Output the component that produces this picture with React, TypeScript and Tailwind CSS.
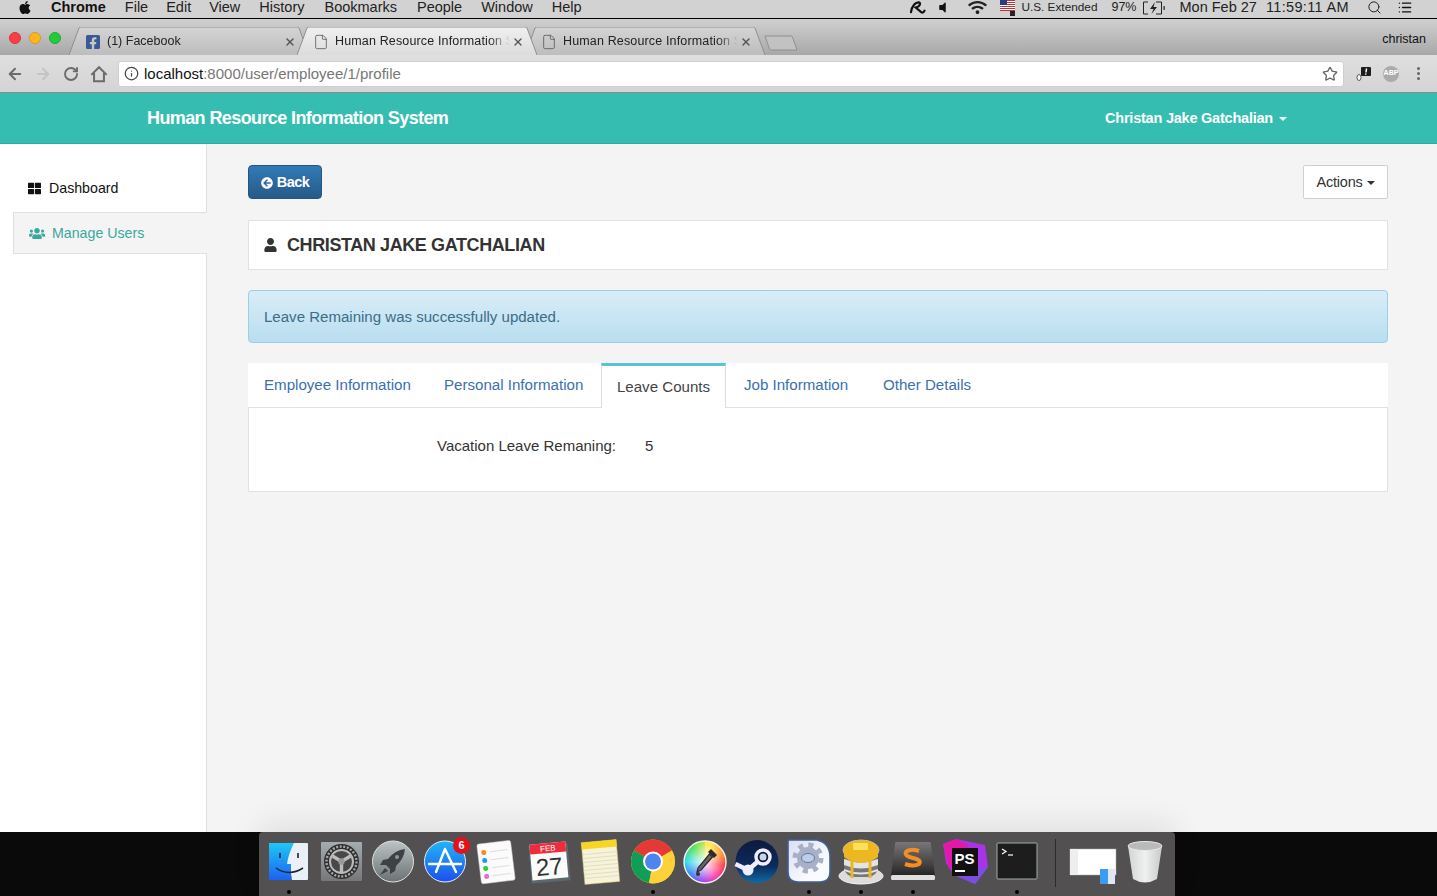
import { Star, X, Info, ArrowLeft, ArrowRight, RotateCw, Search, List, File } from 'lucide-react';
import { FaThLarge, FaUser, FaUsers, FaArrowCircleLeft, FaApple, FaFacebookSquare, FaWifi, FaVolumeOff } from 'react-icons/fa';

const sans = 'font-["Liberation_Sans",Arial,sans-serif]';

function Caret({ className = '' }: { className?: string }) {
    return <span className={`inline-block w-0 h-0 border-x-[4px] border-x-transparent border-t-[4px] border-t-current ${className}`} />;
}

function TabShape({ active }: { active?: boolean }) {
    return (
        <svg className="absolute inset-0 w-full h-full" viewBox="0 0 240 28" preserveAspectRatio="none">
            <defs>
                <linearGradient id="tabOn" x1="0" y1="0" x2="0" y2="1">
                    <stop offset="0" stopColor="#f0f0f0" />
                    <stop offset="1" stopColor="#dcdcdc" />
                </linearGradient>
                <linearGradient id="tabOff" x1="0" y1="0" x2="0" y2="1">
                    <stop offset="0" stopColor="#d4d4d4" />
                    <stop offset="1" stopColor="#bdbdbd" />
                </linearGradient>
            </defs>
            <path d="M0 28 L10 1 Q10.5 0 12 0 L228 0 Q229.5 0 230 1 L240 28" fill={active ? 'url(#tabOn)' : 'url(#tabOff)'} stroke="#8f8f8f" strokeWidth="1" vectorEffect="non-scaling-stroke" />
        </svg>
    );
}

function Tab({ title, active, facebook, className = '' }: { title: string; active?: boolean; facebook?: boolean; className?: string }) {
    return (
        <div className={`relative w-[240px] h-[28px] flex items-center pl-[16px] pr-[13px] pt-[1px] ${active ? 'z-10' : ''} ${className}`}>
            <TabShape active={active} />
            <div className="relative flex items-center w-full min-w-0">
                {facebook ? (
                    <FaFacebookSquare className="text-[#3b5998] w-[16px] h-[16px] shrink-0" />
                ) : (
                    <File className="text-[#555] w-[16px] h-[16px] shrink-0" strokeWidth={1.2} />
                )}
                <div className={`ml-[6px] flex-1 min-w-0 overflow-hidden whitespace-nowrap text-[12.5px] text-[#222] [mask-image:linear-gradient(to_right,black_88%,transparent_100%)] ${facebook ? '' : 'tracking-[0.15px]'}`}>{title}</div>
                <X className="text-[#555] w-[12px] h-[12px] shrink-0 ml-[2px]" strokeWidth={2.8} />
            </div>
        </div>
    );
}

function MenuBar() {
    return (
        <div className="h-[19px] bg-[#d2d2d2] border-b border-black flex items-center justify-between text-[14.5px] text-[#222] leading-none pb-[3px]">
            <div className="flex items-center pl-[18px]">
                <FaApple className="w-[14px] h-[15px] text-[#111] mr-[19px]" />
                <span className="font-bold text-[#111] mr-[19px]">Chrome</span>
                <span className="mr-[18px]">File</span>
                <span className="mr-[18px]">Edit</span>
                <span className="mr-[19px]">View</span>
                <span className="mr-[20px]">History</span>
                <span className="mr-[20px]">Bookmarks</span>
                <span className="mr-[19px]">People</span>
                <span className="mr-[19px]">Window</span>
                <span>Help</span>
            </div>
            <div className="flex items-center pr-[23px]">
                <svg viewBox="0 0 18 14" className="w-[17px] h-[13px] mr-[12px]" fill="none" stroke="#111" strokeWidth="2.4" strokeLinecap="round">
                    <path d="M2 12 C3 6 6 2 10 1.5 C13 1.5 12 6 7 7 L13 12 C14.5 13 16 12 16.5 10.5" />
                </svg>
                <FaVolumeOff className="w-[9px] h-[13px] text-[#111] mr-[21px]" />
                <FaWifi className="w-[19px] h-[15px] text-[#222] mr-[13px]" />
                <svg viewBox="0 0 16 16" className="w-[16px] h-[16px] mr-[5px]">
                    <rect x="0" y="0" width="15" height="11" fill="#fff" />
                    <path d="M0 .5h15M0 2.5h15M0 4.5h15M0 6.5h15M0 8.5h15M0 10.5h15" stroke="#b33" strokeWidth="1" />
                    <rect x="0" y="0" width="7" height="5" fill="#2a3d7c" />
                    <rect x="10" y="11" width="5" height="5" fill="#223" />
                </svg>
                <span className="text-[11.8px] mr-[14px]">U.S. Extended</span>
                <span className="text-[12.5px] mr-[6px]">97%</span>
                <svg viewBox="0 0 24 14" className="w-[24px] h-[14px] mr-[13px]" fill="none" stroke="#222" strokeWidth="1">
                    <path d="M6 1H1.5v12H6M14 1h5.5v12H14" />
                    <path d="M13 1 L8 8h3.5L9.5 13 L15 6h-3.5z" fill="#222" stroke="none" />
                    <rect x="21.5" y="5" width="1.2" height="4" fill="#222" stroke="none" />
                </svg>
                <span className="mr-[9px]">Mon Feb 27</span>
                <span className="mr-[18px] tracking-[0.35px]">11:59:11 AM</span>
                <Search className="w-[15px] h-[15px] text-[#222] mr-[14px]" strokeWidth={1.6} />
                <List className="w-[18px] h-[15px] text-[#111]" strokeWidth={2.2} />
            </div>
        </div>
    );
}

function TabStrip() {
    return (
        <div className="h-[36px] bg-gradient-to-b from-[#d0d0d0] to-[#a8a8a8] flex items-end relative">
            <div className="flex items-center gap-[8px] pl-[9px] w-[69px] self-stretch pt-[2px]">
                <span className="w-[12px] h-[12px] rounded-full bg-[#fc3d48] border border-[#d8333c]" />
                <span className="w-[12px] h-[12px] rounded-full bg-[#fdb522] border border-[#d99a1c]" />
                <span className="w-[12px] h-[12px] rounded-full bg-[#21cb3d] border border-[#1cad34]" />
            </div>
            <Tab title="(1) Facebook" facebook />
            <Tab title="Human Resource Information System" active className="-ml-[12px]" />
            <Tab title="Human Resource Information System" className="-ml-[12px]" />
            <svg viewBox="0 0 34 16" className="w-[34px] h-[16px] -ml-[1px] mb-[4px]">
                <path d="M1 1 H27 Q28 1 28.5 2 L33 15 H7 Q6 15 5.5 14z" fill="#c2c2c2" stroke="#8f8f8f" />
            </svg>
            <span className="absolute right-[11px] top-[11px] text-[12.5px] text-[#111]">christan</span>
        </div>
    );
}

function Toolbar() {
    return (
        <div className="h-[38px] bg-gradient-to-b from-[#dfdfdf] to-[#d4d4d4] border-b border-[#8c8c8c] flex items-center">
            <ArrowLeft className="w-[18px] h-[18px] ml-[6px] text-[#6b6b6b]" strokeWidth={2.6} />
            <ArrowRight className="w-[18px] h-[18px] ml-[10px] text-[#c4c4c4]" strokeWidth={2.6} />
            <RotateCw className="w-[16px] h-[16px] ml-[11px] text-[#6b6b6b]" strokeWidth={2.8} />
            <svg viewBox="0 0 20 20" className="w-[18px] h-[18px] ml-[11px]" fill="none" stroke="#6b6b6b" strokeWidth="2.2">
                <path d="M1.5 11 L10 2.5 L18.5 11" />
                <path d="M4.5 9 V18 H15.5 V9" />
            </svg>
            <div className="ml-[10px] w-[1226px] h-[26px] bg-white rounded-[3px] border border-[#cfcfcf] flex items-center pl-[5px] pr-[5px]">
                <Info className="w-[15px] h-[15px] text-[#444]" strokeWidth={2} />
                <span className="ml-[5px] pt-[1px] text-[15px] text-[#111]">localhost<span className="text-[#777]">:8000/user/employee/1/profile</span></span>
                <Star className="ml-auto w-[16px] h-[16px] text-[#666]" strokeWidth={2} />
            </div>
            <svg viewBox="0 0 16 16" className="w-[16px] h-[16px] ml-[12px]">
                <rect x="5" y="1" width="10" height="9" rx="1" fill="#1c1c1c" />
                <path d="M10.5 2.5 L10 6.5M9.7 7.6v1.2" stroke="#fff" strokeWidth="1.5" />
                <ellipse cx="3" cy="11.5" rx="2" ry="3" fill="#fff" stroke="#555" />
            </svg>
            <span className="ml-[11px] w-[16px] h-[16px] rounded-full bg-[#ababab] text-white text-[7px] font-bold flex items-center justify-center">ABP</span>
            <span className="ml-[18px] flex flex-col gap-[2px]">
                <span className="w-[3px] h-[3px] rounded-full bg-[#666]" />
                <span className="w-[3px] h-[3px] rounded-full bg-[#666]" />
                <span className="w-[3px] h-[3px] rounded-full bg-[#666]" />
            </span>
        </div>
    );
}

function Navbar() {
    return (
        <div className="h-[51px] bg-[#35bdb1] border-b border-[#2ea99e] flex items-center text-white font-bold shrink-0">
            <span className="ml-[147px] text-[18px] tracking-[-0.6px]">Human Resource Information System</span>
            <span className="ml-auto mr-[150px] pt-[1px] text-[14.5px] tracking-[-0.22px] flex items-center gap-[6px]">
                Christan Jake Gatchalian <Caret />
            </span>
        </div>
    );
}

function Sidebar() {
    return (
        <div className="w-[207px] bg-white border-r border-[#e2e2e2] pt-[23px] shrink-0">
            <div className="h-[45px] pb-[2px] flex items-center pl-[28px] text-[14.2px] text-[#111]">
                <FaThLarge className="w-[13px] h-[13px] mr-[8px]" />
                Dashboard
            </div>
            <div className="h-[42px] ml-[13px] -mr-px bg-[#f4f4f4] border-y border-l border-[#e0e0e0] flex items-center pl-[15px] pt-[1px] text-[14.2px] text-[#3aa89f]">
                <FaUsers className="w-[16px] h-[15px] mr-[7px]" />
                Manage Users
            </div>
        </div>
    );
}

function Content() {
    return (
        <div className="flex-1 bg-[#f4f4f4] pl-[41px] pr-[49px] pt-[21px]">
            <div className="flex justify-between items-start">
                <button className="h-[34px] w-[74px] pt-[1px] rounded-[4px] bg-gradient-to-b from-[#337ab7] to-[#265a88] border border-[#245580] text-white font-bold text-[14.5px] tracking-[-0.5px] flex items-center justify-center gap-[4px]">
                    <FaArrowCircleLeft className="w-[12px] h-[12px]" />
                    Back
                </button>
                <button className="h-[34px] w-[85px] pt-[1px] bg-white border border-[#d0d0d0] rounded-[2px] text-[14.5px] text-[#333] tracking-[-0.2px] flex items-center justify-center gap-[4px]">
                    Actions <Caret />
                </button>
            </div>
            <div className="mt-[21px] h-[50px] bg-white border border-[#e2e2e2] flex items-center pl-[15px] text-[#333]">
                <FaUser className="w-[13px] h-[14px] mr-[10px]" />
                <span className="text-[18px] font-bold tracking-[-0.4px]">CHRISTAN JAKE GATCHALIAN</span>
            </div>
            <div className="mt-[20px] h-[53px] pt-[1px] rounded-[4px] bg-gradient-to-b from-[#d9edf7] to-[#b9def0] border border-[#9acfea] flex items-center pl-[15px] text-[15.05px] text-[#3b6d88]">
                Leave Remaining was successfully updated.
            </div>
            <div className="mt-[20px] h-[45px] bg-white flex text-[15.1px] text-[#3a70b0]">
                <span className="pl-[16px] pt-[11px] w-[180px]">Employee Information</span>
                <span className="pl-[16px] pt-[11px] w-[173px]">Personal Information</span>
                <span className="w-[125px] border-x border-[#ddd] border-t-[3px] border-t-[#5bc0de] bg-white text-[#444] pt-[10px] text-center h-[45px] relative z-10">Leave Counts</span>
                <span className="pl-[18px] pt-[11px] w-[157px]">Job Information</span>
                <span className="pt-[11px]">Other Details</span>
            </div>
            <div className="-mt-px h-[85px] bg-white border border-[#e2e2e2] flex pt-[29px] pl-[188px] text-[15px] text-[#333] leading-[18px]">
                <span className="w-[208px]">Vacation Leave Remaning:</span>
                <span>5</span>
            </div>
        </div>
    );
}

function Dock() {
    const slot = 'w-[48px] h-[48px] relative shrink-0 mr-[4px]';
    const dot = <span className="absolute left-[22px] -bottom-[7px] w-[4px] h-[4px] rounded-full bg-black" />;
    return (
        <div className="absolute left-[259px] top-[832px] w-[916px] h-[64px] bg-[#525051] rounded-t-[4px] flex pl-[6px] pt-[7px] shadow-[0_-10px_30px_rgba(0,0,0,0.08)]">
            <div className={slot}>
                <svg viewBox="0 0 48 48" className="w-full h-full">
                    <defs>
                        <linearGradient id="fb" x1="0" y1="0" x2="0" y2="1"><stop offset="0" stopColor="#1fc8f7" /><stop offset="1" stopColor="#1b62f0" /></linearGradient>
                    </defs>
                    <rect x="4" y="4" width="39" height="37" rx="1" fill="#e9f0f7" />
                    <path d="M4 4 H29 Q23 16 22 25 H26 Q25.5 34 27 41 H4z" fill="url(#fb)" />
                    <path d="M15 14v5M33 14v5" stroke="#222" strokeWidth="1.6" />
                    <path d="M11 29 Q24 38 38 29" stroke="#222" strokeWidth="1.5" fill="none" />
                </svg>
                {dot}
            </div>
            <div className={slot}>
                <svg viewBox="0 0 48 48" className="w-full h-full">
                    <defs><linearGradient id="sp" x1="0" y1="0" x2="0" y2="1"><stop offset="0" stopColor="#a3adb0" /><stop offset="1" stopColor="#777779" /></linearGradient></defs>
                    <rect x="4" y="3" width="41" height="39" rx="1" fill="url(#sp)" />
                    <circle cx="24.5" cy="22.5" r="17.5" fill="#2f2f2f" />
                    <circle cx="24.5" cy="22.5" r="15" fill="none" stroke="#a8a8a8" strokeWidth="2.4" strokeDasharray="2 1.6" />
                    <circle cx="24.5" cy="22.5" r="12.5" fill="#bcbcbc" />
                    <circle cx="24.5" cy="22.5" r="10.5" fill="#484848" />
                    <path d="M24.5 22.5 V33 M24.5 22.5 L15.5 17 M24.5 22.5 L33.5 17" stroke="#bcbcbc" strokeWidth="3.4" />
                    <circle cx="24.5" cy="22.5" r="3.2" fill="#999" />
                </svg>
            </div>
            <div className={slot}>
                <svg viewBox="0 0 48 48" className="w-full h-full">
                    <defs><linearGradient id="lp" x1="0" y1="0" x2="0" y2="1"><stop offset="0" stopColor="#bcc3c5" /><stop offset="1" stopColor="#6b7274" /></linearGradient></defs>
                    <circle cx="24" cy="22.5" r="20.5" fill="url(#lp)" stroke="#dfe3e3" strokeWidth="1" />
                    <path d="M36 10 Q26 11 19 20 L14 21 L11 26 L17 26 L21 30 L21 35 L26 32 L27 27 Q35 20 36 10z" fill="#3d4244" />
                    <path d="M16 29 L11 36 L19 32z" fill="#3d4244" />
                    <circle cx="28" cy="18" r="2" fill="#8f979a" />
                </svg>
            </div>
            <div className={slot}>
                <svg viewBox="0 0 48 48" className="w-full h-full">
                    <defs><linearGradient id="as" x1="0" y1="0" x2="0" y2="1"><stop offset="0" stopColor="#21b6f6" /><stop offset="1" stopColor="#1b4ff0" /></linearGradient></defs>
                    <circle cx="24" cy="22.5" r="20.5" fill="url(#as)" stroke="#e6eefa" strokeWidth="1" />
                    <path d="M24 10 L15 33 M24 10 L35 33 M8 25 H40" stroke="#fff" strokeWidth="2.4" strokeLinecap="round" />
                </svg>
                <span className="absolute -top-[2px] -right-px w-[17px] h-[17px] rounded-full bg-[#e6101d] text-white text-[11px] font-bold flex items-center justify-center">6</span>
            </div>
            <div className={slot}>
                <svg viewBox="0 0 48 48" className="w-full h-full">
                    <g transform="rotate(-7 24 23)">
                        <rect x="6" y="3" width="34" height="40" rx="2" fill="#fbfbfb" stroke="#ccc" strokeWidth="0.5" />
                        <circle cx="12" cy="12" r="2.5" fill="#f98a1e" />
                        <circle cx="12" cy="20" r="2.5" fill="#1f9cf0" />
                        <circle cx="12" cy="28" r="2.5" fill="#25d33c" />
                        <circle cx="12" cy="36" r="2.5" fill="#e06be0" />
                        <path d="M18 12H36M18 20H36M18 28H36M18 36H36" stroke="#ddd" strokeWidth="1" />
                    </g>
                </svg>
            </div>
            <div className={slot}>
                <svg viewBox="0 0 48 48" className="w-full h-full">
                    <g transform="rotate(-5 24 23)">
                        <rect x="5" y="6" width="39" height="37" fill="#5a6970" />
                        <rect x="6" y="4" width="36" height="36" fill="#fbfbfb" />
                        <rect x="6" y="4" width="36" height="10" fill="#ee2c3c" />
                        <text x="24" y="12" textAnchor="middle" fontSize="8" fill="#fff" fontFamily="Liberation Sans">FEB</text>
                        <text x="24" y="36" textAnchor="middle" fontSize="24" fill="#333" fontFamily="Liberation Sans">27</text>
                    </g>
                </svg>
            </div>
            <div className={slot}>
                <svg viewBox="0 0 48 48" className="w-full h-full">
                    <g transform="rotate(-5 24 23)">
                        <rect x="6" y="2" width="35" height="42" fill="#f7f3d8" stroke="#c9b45e" strokeWidth="0.5" />
                        <rect x="6" y="2" width="35" height="7" fill="#f7d524" />
                        <path d="M6 14H41M6 18H41M6 22H41M6 26H41M6 30H41M6 34H41M6 38H41" stroke="#d8d4bb" strokeWidth="0.7" />
                    </g>
                </svg>
            </div>
            <div className={slot}>
                <svg viewBox="0 0 48 48" className="w-full h-full">
                    <circle cx="24" cy="22.5" r="22" fill="#f1c40f" />
                    <path d="M24 22.5 L5 11.5 A22 22 0 0 1 43 11.5z" fill="#e53935" />
                    <path d="M24 22.5 L5 11.5 A22 22 0 0 0 20 44.1z" fill="#0f9d58" />
                    <path d="M24 22.5 L43 11.5 A22 22 0 0 1 20 44.1z" fill="#fdd13a" />
                    <circle cx="24" cy="22.5" r="10" fill="#fff" />
                    <circle cx="24" cy="22.5" r="8" fill="#4f83ed" />
                </svg>
                {dot}
            </div>
            <div className={slot}>
                <svg viewBox="0 0 48 48" className="w-full h-full">
                    <defs>
                        <radialGradient id="cw"><stop offset="0" stopColor="#fff" stopOpacity="0.95" /><stop offset="0.45" stopColor="#fff" stopOpacity="0.55" /><stop offset="1" stopColor="#fff" stopOpacity="0" /></radialGradient>
                    </defs>
                    <foreignObject x="3" y="2" width="42" height="42">
                        <div className="w-[42px] h-[42px] rounded-full bg-[conic-gradient(#ffe53a_20deg,#ff9a1f_60deg,#ff2d3c_100deg,#ff2da8_145deg,#8a3df0_190deg,#2a7df5_230deg,#22d6e8_270deg,#3be04a_320deg,#ffe53a_380deg)]" />
                    </foreignObject>
                    <circle cx="24" cy="23" r="21" fill="url(#cw)" stroke="#f2f2f2" strokeWidth="1.4" />
                    <path d="M30 10 L36 16 L33 19 L27 13z" fill="#2b2b2b" />
                    <path d="M28.5 15 L31.5 18 L20 31 L16 33 L17 29z" fill="#666" stroke="#2b2b2b" strokeWidth="1.2" />
                    <circle cx="17" cy="35" r="2" fill="#333" />
                </svg>
            </div>
            <div className={slot}>
                <svg viewBox="0 0 48 48" className="w-full h-full">
                    <defs><linearGradient id="st" x1="0" y1="0" x2="0" y2="1"><stop offset="0" stopColor="#0d1a3d" /><stop offset="0.6" stopColor="#0c2a5c" /><stop offset="1" stopColor="#0f6aa8" /></linearGradient></defs>
                    <circle cx="24" cy="22.5" r="21.5" fill="url(#st)" />
                    <path d="M2.5 25 L15 31 L29 19" stroke="#eef" strokeWidth="4.5" fill="none" />
                    <circle cx="30" cy="18" r="7" fill="#0d1a3d" stroke="#eef" strokeWidth="3.4" />
                    <circle cx="30" cy="18" r="3.5" fill="#c9d4e6" />
                    <circle cx="15" cy="31" r="5.5" fill="#eef" />
                </svg>
            </div>
            <div className={slot}>
                <svg viewBox="0 0 48 48" className="w-full h-full">
                    <defs><linearGradient id="gd" x1="0" y1="0" x2="1" y2="1"><stop offset="0" stopColor="#d9def2" /><stop offset="0.7" stopColor="#fafbfe" /></linearGradient></defs>
                    <path d="M3 1 H32 Q45 4 45 18 V33 Q45 43 35 43 H13 Q3 43 3 33z" fill="url(#gd)" stroke="#3f5f96" strokeWidth="1.6" />
                    <circle cx="23" cy="19" r="11" fill="#a9afc7" />
                    <circle cx="23" cy="19" r="13" fill="none" stroke="#a9afc7" strokeWidth="5" strokeDasharray="5 5.2" />
                    <ellipse cx="23" cy="19" rx="6.5" ry="4.5" fill="#b9cdee" stroke="#6f7890" />
                </svg>
                {dot}
            </div>
            <div className={slot}>
                <svg viewBox="0 0 48 48" className="w-full h-full">
                    <ellipse cx="24" cy="37" rx="22" ry="8" fill="#dcdcdc" stroke="#f2f2f2" />
                    <rect x="7" y="12" width="34" height="26" rx="10" fill="#777" />
                    <path d="M7 20 Q24 27 41 20 V26 Q24 33 7 26z" fill="#e4e4e4" />
                    <path d="M7 30 Q24 37 41 30 V32 Q24 39 7 32z" fill="#e4e4e4" />
                    <ellipse cx="24" cy="11" rx="18" ry="10" fill="#edb71f" stroke="#c9c09a" />
                    <path d="M7 14 Q24 28 41 14 L41 18 Q24 30 7 18z" fill="#edb71f" />
                    <rect x="16" y="4" width="15" height="7" rx="1" fill="#fbe05a" />
                    <path d="M15 20v19M33 20v19" stroke="#edb71f" strokeWidth="3" />
                </svg>
                {dot}
            </div>
            <div className={slot}>
                <svg viewBox="0 0 48 48" className="w-full h-full">
                    <defs><linearGradient id="sb" x1="0" y1="0" x2="0" y2="1"><stop offset="0" stopColor="#777" /><stop offset="0.75" stopColor="#3a3a3a" /><stop offset="1" stopColor="#222" /></linearGradient></defs>
                    <path d="M7 3 H41 Q42 3 42 5 L46 37 H2 L6 5 Q6 3 7 3z" fill="url(#sb)" />
                    <rect x="2" y="36" width="44" height="5" rx="1.5" fill="#dedede" />
                    <path d="M30 12 Q21 9 17 13 Q15 17 24 19 Q33 21 30 25 Q25 28 16 25" stroke="#f48d24" strokeWidth="4" fill="none" />
                </svg>
                {dot}
            </div>
            <div className={slot}>
                <svg viewBox="0 0 48 48" className="w-full h-full">
                    <path d="M2 5 L15 0 L44 6 L47 28 L34 45 L13 36 L5 24z" fill="#a833e8" />
                    <path d="M2 5 L15 0 L28 7 L8 30z" fill="#e417a8" />
                    <path d="M13 36 L34 45 L47 28 L30 30z" fill="#7a4fe0" />
                    <rect x="11" y="9" width="26" height="28" fill="#111" />
                    <text x="13.5" y="25" fontSize="15" fontWeight="bold" fill="#fff" fontFamily="Liberation Sans">PS</text>
                    <rect x="14" y="31" width="10" height="2" fill="#fff" />
                </svg>
            </div>
            <div className={slot}>
                <svg viewBox="0 0 48 48" className="w-full h-full">
                    <rect x="4" y="4" width="40" height="36" rx="1" fill="#1d1d1d" stroke="#a0acac" strokeWidth="1" />
                    <path d="M9 10 L13 12.5 L9 15" stroke="#fff" strokeWidth="1.2" fill="none" />
                    <path d="M15 16 H20" stroke="#fff" strokeWidth="1.2" />
                </svg>
                {dot}
            </div>
            <div className="w-px h-[48px] bg-[#2b2b2b] ml-[10px] mr-[13px] shrink-0" />
            <div className={slot}>
                <svg viewBox="0 0 48 48" className="w-full h-full">
                    <rect x="1" y="10" width="46" height="26" fill="#fff" stroke="#aaa" strokeWidth="0.5" />
                    <rect x="1" y="10" width="8" height="26" fill="#eee" />
                    <rect x="31" y="30" width="15" height="15" fill="#3d9bf2" />
                    <path d="M39 30 V45 H46 V30z" fill="#dde8f3" />
                </svg>
            </div>
            <div className={slot}>
                <svg viewBox="0 0 48 48" className="w-full h-full">
                    <defs><linearGradient id="tr" x1="0" y1="0" x2="1" y2="0"><stop offset="0" stopColor="#d2d4d4" /><stop offset="0.5" stopColor="#eff0f0" /><stop offset="1" stopColor="#c8caca" /></linearGradient></defs>
                    <path d="M7 7 L12 40 Q24 47 36 40 L41 7z" fill="url(#tr)" />
                    <ellipse cx="24" cy="7" rx="17" ry="4.5" fill="#b9bbbb" stroke="#e8e8e8" />
                </svg>
            </div>
        </div>
    );
}

export default function App() {
    return (
        <div className={`relative w-[1437px] h-[896px] overflow-hidden bg-[#0a0a0a] ${sans}`}>
            <div className="h-[832px] flex flex-col">
                <MenuBar />
                <TabStrip />
                <Toolbar />
                <Navbar />
                <div className="flex-1 flex min-h-0">
                    <Sidebar />
                    <Content />
                </div>
            </div>
            <Dock />
        </div>
    );
}
